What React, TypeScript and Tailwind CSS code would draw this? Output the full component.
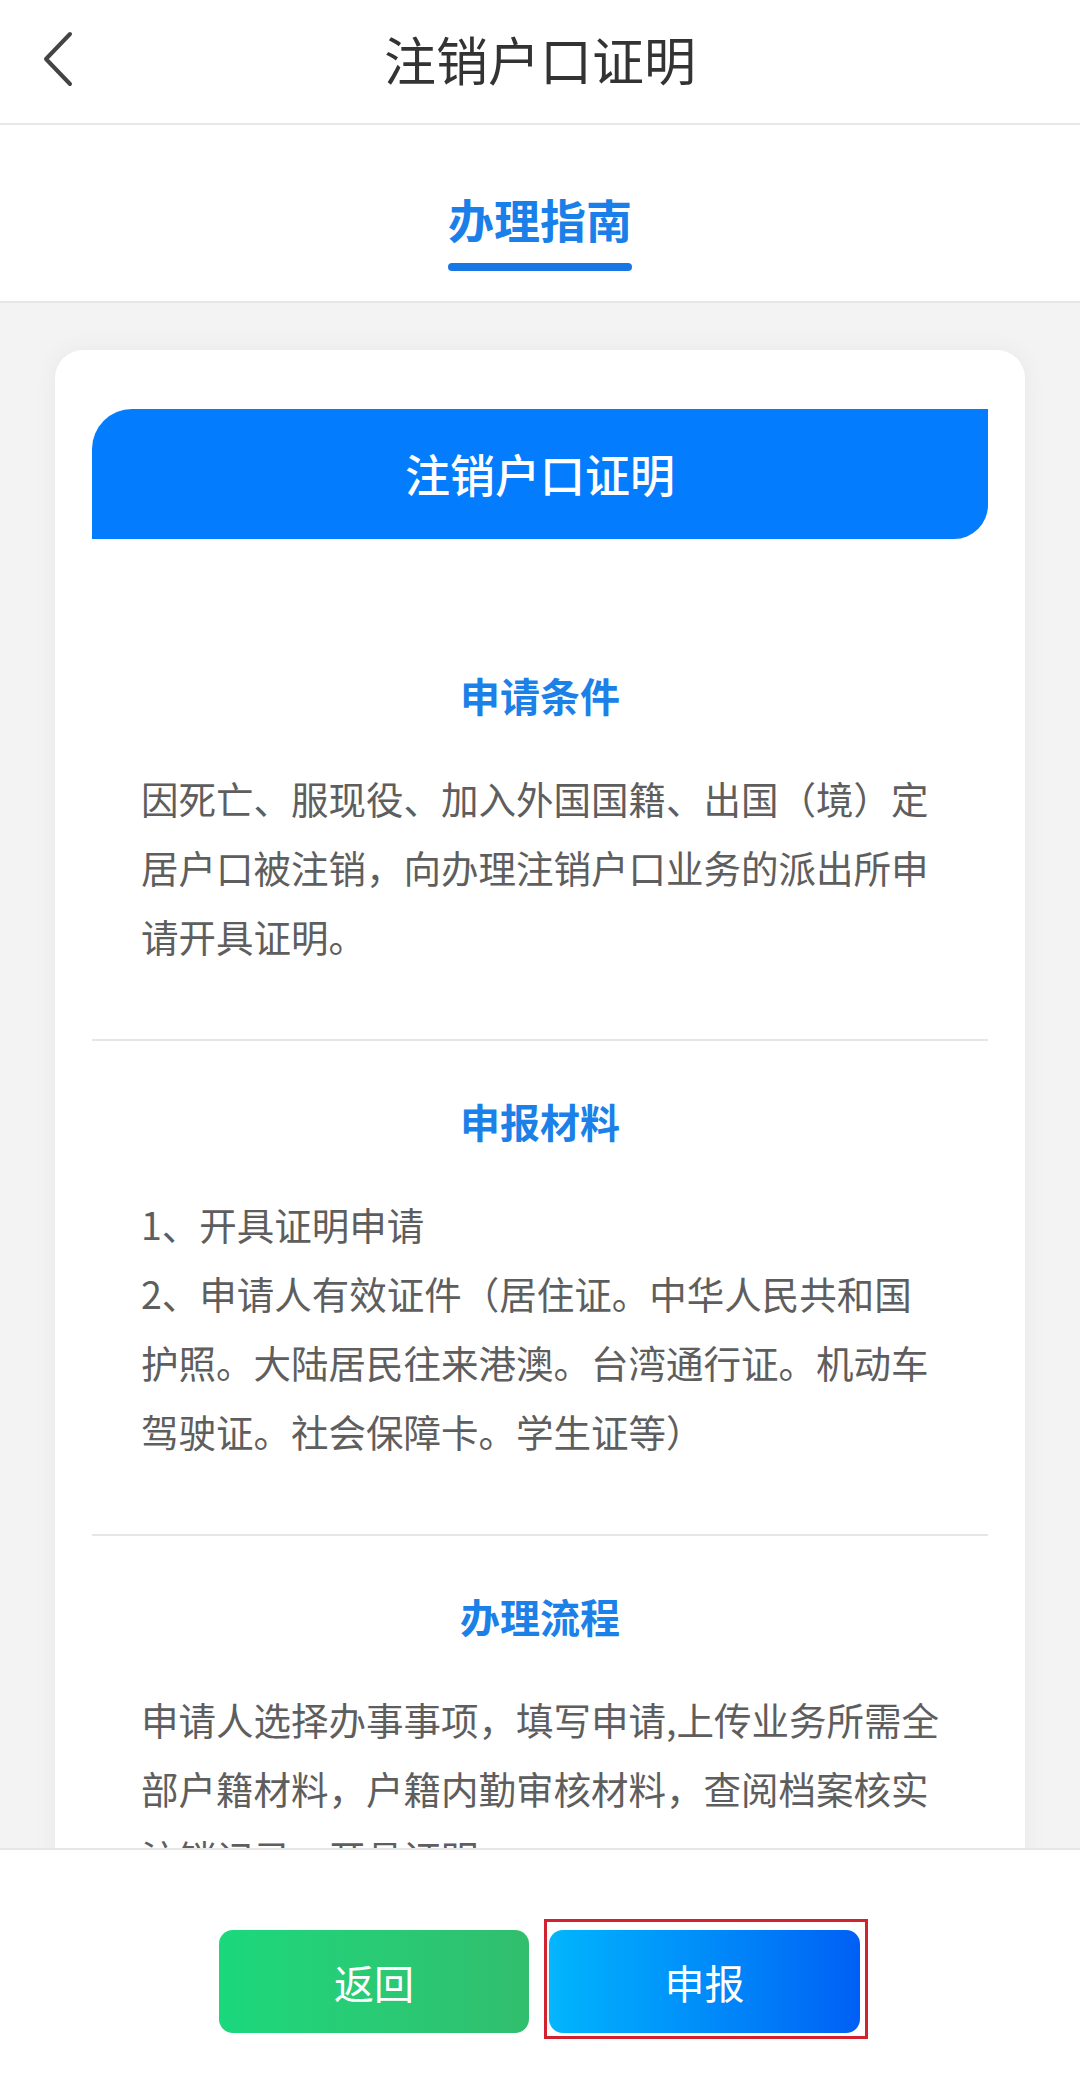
import React from 'react';

const sections = [
  {
    title: '申请条件',
    lines: [
      '因死亡、服现役、加入外国国籍、出国（境）定',
      '居户口被注销，向办理注销户口业务的派出所申',
      '请开具证明。',
    ],
  },
  {
    title: '申报材料',
    lines: [
      '1、开具证明申请',
      '2、申请人有效证件（居住证。中华人民共和国',
      '护照。大陆居民往来港澳。台湾通行证。机动车',
      '驾驶证。社会保障卡。学生证等）',
    ],
  },
  {
    title: '办理流程',
    lines: [
      '申请人选择办事事项，填写申请,上传业务所需全',
      '部户籍材料，户籍内勤审核材料，查阅档案核实',
      '注销记录，开具证明。',
    ],
  },
];

const BackIcon = () => (
  <svg width="32" height="56" viewBox="0 0 32 56" fill="none">
    <polyline
      points="28,3 4,28 28,53"
      stroke="#444"
      strokeWidth="4"
      strokeLinecap="round"
      strokeLinejoin="round"
    />
  </svg>
);

export default function App() {
  return (
    <div
      className="flex h-[2087px] w-[1080px] flex-col overflow-hidden bg-white"
      style={{ fontFamily: '"Noto Sans CJK SC", "Noto Sans", sans-serif' }}
    >
      {/* Header */}
      <div className="grid h-[125px] shrink-0 grid-cols-[1fr_auto_1fr] items-center border-b-2 border-[#e8e8e8] pb-[6px]">
        <div className="pl-[42px]">
          <BackIcon />
        </div>
        <div className="text-[52px] leading-[60px] text-[#333]">注销户口证明</div>
        <div />
      </div>

      {/* Tab */}
      <div className="flex h-[178px] shrink-0 flex-col items-center border-b-2 border-[#e6e6e6] pt-[63px]">
        <div className="text-[46px] font-semibold leading-[60px] text-[#1a7fe8]">办理指南</div>
        <div className="mt-[15px] h-[8px] w-[184px] rounded-full bg-[#1677e5]" />
      </div>

      {/* Content */}
      <div className="flex-1 overflow-hidden bg-[#f3f3f3] pt-[47px]">
        <div className="mx-[55px] rounded-[28px] bg-white px-[37px] pt-[59px] shadow-[0_0_24px_rgba(0,0,0,0.05)]">
          <div className="flex h-[130px] items-center justify-center rounded-tl-[40px] rounded-br-[34px] bg-[#047cfe]">
            <span className="text-[45px] font-medium text-white">注销户口证明</span>
          </div>

          {sections.map((s, i) => (
            <div key={s.title}>
              {i > 0 && <div className="h-[2px] bg-[#e6e6e6]" />}
              <div className={`${i === 0 ? 'pt-[126px]' : 'pt-[50px]'} pb-[69px]`}>
                <div className="text-center text-[40px] font-semibold leading-[60px] text-[#1b80e8]">
                  {s.title}
                </div>
                <div className="mt-[38px] px-[49px] text-[37.5px] leading-[69px] text-[#5e5e5e]">
                  {s.lines.map((line) => (
                    <div key={line} className="whitespace-nowrap">
                      {line}
                    </div>
                  ))}
                </div>
              </div>
            </div>
          ))}
        </div>
      </div>

      {/* Bottom bar */}
      <div className="box-border flex h-[239px] shrink-0 items-start justify-center border-t-2 border-[#e6e6e6] bg-white pl-[7px] pt-[69px]">
        <button className="mt-[11px] flex h-[103px] w-[310px] items-center justify-center rounded-[14px] bg-gradient-to-r from-[#1ad87c] to-[#31be6d] text-[40px] text-white">
          返回
        </button>
        <div className="ml-[15px] border-[3px] border-[#d3222f] pb-[3px] pl-[2px] pr-[5px] pt-[8px]">
          <button className="flex h-[103px] w-[311px] items-center justify-center rounded-[14px] bg-gradient-to-r from-[#07b5fc] to-[#005ff5] text-[40px] text-white">
            申报
          </button>
        </div>
      </div>
    </div>
  );
}
